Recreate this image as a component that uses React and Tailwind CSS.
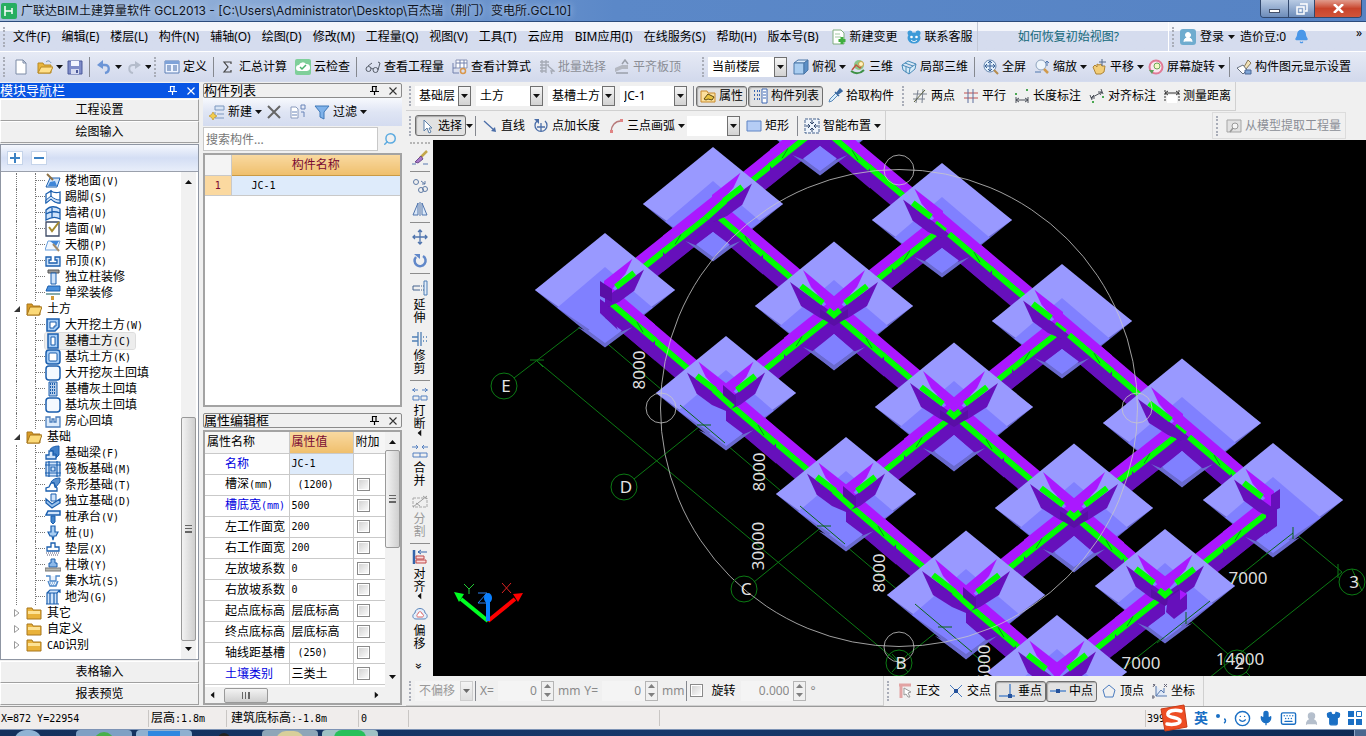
import React, { useState } from 'react';
import { Bell, Smile, Mic, Keyboard, Shirt, Search, UserRound } from 'lucide-react';

/* ---------- icons ---------- */

const B = '#1b5fae';
const L = '#cfe3fa';

const glyphs = {
  file: <path d="M3 1h7l3 3v11H3z M10 1v3h3" fill="#fff" stroke="#7d8ba5" />,
  open: <><path d="M1 4h5l1 2h7v8H1z" fill="#e9b53c" stroke="#b98a24" /><path d="M4 8h12l-3 6H1z" fill="#ffe08a" stroke="#b98a24" /><path d="M9 3c2-2 4-1 5 1" fill="none" stroke="#6f8fb8" /></>,
  save: <><path d="M1 2h14v13H1z" fill="#7f8cc8" stroke="#4d5a9a" /><path d="M4 2h8v5H4z" fill="#f4f6ff" /><path d="M4 10h8v5H4z" fill="#d5daf0" /><path d="M9 11h2v3H9z" fill="#4d5a9a" /></>,
  undo: <><path d="M4 6h5c5 0 5 7 0 8" fill="none" stroke="#6c95d6" strokeWidth="2.4" /><path d="M7 1v9L1 6z" fill="#6c95d6" /></>,
  redo: <><path d="M12 6H7c-5 0-5 7 0 8" fill="none" stroke="#b4bccb" strokeWidth="2" /><path d="M9 2v8l6-4z" fill="#b4bccb" /></>,
  define: <><path d="M1 2h14v12H1z" fill="#eef4ff" stroke="#5d7fb5" /><path d="M1 2h14v3H1z" fill="#7ea2d8" /><path d="M3 7h4M3 9h4M3 11h4M9 7h4M9 9h4M9 11h4" stroke="#3f66a5" /></>,
  sum: <path d="M11 5V3H4l4 5-4 5h7v-2" fill="none" stroke="#444" strokeWidth="1.200" />,
  cloud: <><rect width="16" height="16" rx="2" fill="#7fcf9a" /><path d="M4 12a3 3 0 0 1 0-6 4 4 0 0 1 7-1 3.500 3.500 0 0 1 1 7z" fill="#fff" /><path d="M5 8l2 2 4-4" fill="none" stroke="#49b36e" strokeWidth="1.500" /></>,
  glasses: <path d="M1 10a2.500 2.500 0 1 0 5 0a2.500 2.500 0 1 0-5 0M8 11a2.500 2.500 0 1 0 5 0a2.500 2.500 0 1 0-5 0M6 9l2 1M3 7l4-3M13 11l2-7-2-1" fill="none" stroke="#555c68" />,
  formula: <><path d="M4 1h11v8H4z" fill="#fff" stroke="#8893b5" /><path d="M4 4h11M8 1v8M12 1v8M1 4v10h6M1 9h3" stroke="#7381ad" fill="none" /><circle cx="11" cy="12" r="2.500" fill="none" stroke="#d9974c" strokeWidth="1.500" /></>,
  batch: <path d="M1 3h9M1 6h9M1 9h6M1 12h6M3 1v13M7 1v13M9 7l6 5-3 0 1 3" fill="none" stroke="#a5aab5" strokeWidth="1.300" />,
  slab: <><path d="M1 9l7-3h6v4H8l-7 3z" fill="#b4b8c1" /><path d="M8 5l3-4 3 4M2 14h12" stroke="#9ba0aa" fill="none" strokeWidth="1.500" /></>,
  cube: <><path d="M1 4l4-3h10l-4 3z" fill="#dcebfa" stroke="#4c78a8" /><path d="M1 4h10v11H1z" fill="#a9cdf0" stroke="#4c78a8" /><path d="M11 4l4-3v10l-4 4z" fill="#5b8fc6" stroke="#4c78a8" /></>,
  orbit: <><circle cx="9" cy="6" r="5" fill="#8cc78a" /><path d="M2 11l4-5 4 3 3-4" stroke="#c1553e" strokeWidth="1.500" fill="none" /><path d="M1 12c4 3 9 3 13-1" stroke="#3d9145" strokeWidth="2" fill="none" /><circle cx="11" cy="5" r="2.500" fill="#fff3c0" stroke="#caa24a" /></>,
  local3d: <path d="M1 6l6-4 8 3-1 5-6 5-6-4zM1 6l8 3 6-4M9 9l-1 6M4 4l8 3M5 7.500v6" fill="#d6ebf8" stroke="#4a8bb8" />,
  full: <><circle cx="7" cy="7" r="6" fill="#e2f0fc" stroke="#6787ae" /><path d="M7 2v10M2 7h10M5 4l2-2 2 2M5 10l2 2 2-2M4 5L2 7l2 2M10 5l2 2-2 2" stroke="#365f96" fill="none" /><path d="M11 11l4 4" stroke="#b58b4c" strokeWidth="2" /></>,
  zoom: <><circle cx="7" cy="6" r="5" fill="#eef5fc" stroke="#8fa4be" /><path d="M10 10l4 4" stroke="#d09a4c" strokeWidth="2.500" /><path d="M13 2v5M11 4l2-2 2 2M1 13h6" stroke="#4f77ad" fill="none" /></>,
  pan: <><path d="M2 8l2-2 2 2V5l2 1 2-1 1 2 3 0-1 6-3 2H5z" fill="#f2cd78" stroke="#ae8434" /><path d="M11 0v7M8 3h7" stroke="#52688a" /></>,
  spin: <><circle cx="8" cy="8" r="6.500" fill="#fbe6ef" stroke="#e07a96" strokeWidth="2" /><circle cx="9" cy="7" r="3" fill="#f5f9c8" stroke="#6aa858" /><path d="M1 11l3 4 2-4z" fill="#5aa05a" /></>,
  display: <><path d="M8 8l4-7 3 3-5 6z" fill="#f2e2b8" stroke="#8a7a58" /><path d="M1 9l6-3 4 5-4 4z" fill="#fff" stroke="#66707f" /><path d="M9 11h6v4H9z" fill="#7fa5d6" stroke="#4c6896" /></>,
  props: <><path d="M1 3h6l1 2h7v9H1z" fill="#fbdf9c" stroke="#c88a2e" /><path d="M4 11l4-5 6 3-2 3-4-1-2 1z" fill="#e8c240" stroke="#5d4a12" /></>,
  list: <><path d="M2 3h2M2 7h2M2 11h2M5 3h3M5 7h3M5 11h3" stroke="#3c67b2" strokeWidth="2" strokeDasharray="1 1" /><path d="M10 1h5v14h-5z" fill="#fff" stroke="#3c67b2" /><path d="M11 4h3M11 7h3M11 10h3" stroke="#3c67b2" /></>,
  dropper: <><path d="M2 14l1-3 6-6 2 2-6 6z" fill="#d9effc" stroke="#5b88b8" /><path d="M8 4l4 4M10 5l3-4 2 2-4 3z" stroke="#3b69a0" fill="#3b69a0" strokeWidth="1.500" /></>,
  twoPoint: <><path d="M1 6h14M1 11h12M6 2L4 15M11 1l-1 14" fill="none" stroke="#7a8290" /><path d="M2 14L13 2" stroke="#5a5f3c" /></>,
  parallel: <><path d="M1 5h14M1 10h14" stroke="#c24f4f" /><path d="M5 1v14M10 1v14" stroke="#5d6f9e" /></>,
  length: <><path d="M2 9v6M14 9v6M2 12h12M5 10l-3 2 3 2M11 10l3 2-3 2" fill="none" stroke="#4a4f58" /><path d="M1 5h2v2H1zM12 1h2v2h-2z" fill="#4aa852" /></>,
  aligned: <><path d="M1 7l2 5M12 1l2 5M2 10l11-6M5 7l-3 3 4 0M9 4l4 0-2 3" fill="none" stroke="#4a4f58" /><path d="M3 13h2v2H3zM13 8h2v2h-2z" fill="#4aa852" /></>,
  measure: <><path d="M3 7h10v8H3z" fill="#fff" /><path d="M1 2v12M15 2v12" stroke="#333" strokeDasharray="2 1" /><path d="M1 5h14M4 3L1 5l3 2M12 3l3 2-3 2" fill="none" stroke="#333" /></>,
  cursor: <path d="M5 2v11l3-3 2 5 2-1-2-4h3z" fill="#fff" stroke="#5b7fa8" />,
  line: <><path d="M2 3l10 9" stroke="#4b6ea8" strokeWidth="1.300" /><path d="M14 14l-5-1 4-4z" fill="#4b6ea8" /></>,
  addLen: <><path d="M4 3a6 6 0 1 0 8 0M8 5v8M4 9h8" fill="none" stroke="#4b6ea8" strokeWidth="1.300" /><path d="M1 1h5v5z" fill="#4b6ea8" /></>,
  arc: <><path d="M3 14C3 8 7 3 13 3" fill="none" stroke="#b87a7a" strokeWidth="1.400" /><path d="M2 12h3v3H2zM12 1h3v3h-3z" fill="#e08484" /></>,
  rect: <path d="M1 3h14v10H1z" fill="#b5cdf5" stroke="#5f84c4" />,
  smart: <><path d="M1 1h14v14H1z" fill="#eef4fb" stroke="#44608c" strokeDasharray="3 1" /><path d="M8 2v4M8 10v4M2 8h4M10 8h4M6 4l2 2 2-2M6 12l2-2 2 2M4 6l2 2-2 2M12 6l-2 2 2 2" fill="none" stroke="#33496e" /></>,
  extract: <><path d="M1 2h14v12H1z" fill="#e2e2e2" stroke="#a5a5a5" /><circle cx="9" cy="8" r="3" fill="#f5f5f5" stroke="#999" /><path d="M7 10l-3 4" stroke="#999" strokeWidth="1.500" /></>,
  newItem: <><path d="M6 2h9v4H6zM8 10h7" fill="#d9e5f5" stroke="#7d98bf" /><path d="M6 8v6h9" stroke="#7d98bf" fill="none" /><path d="M4 8l1.500 2.500L8 12l-2.500 1.500L4 16l-1.500-2.500L0 12l2.500-1.500z" fill="#f2cc4d" stroke="#b98c1d" strokeWidth=".6" /></>,
  remove: <path d="M2 2l12 12M14 2L2 14" stroke="#666" strokeWidth="2" />,
  copyList: <><path d="M1 3h5l2 2v9H1z" fill="#fff" stroke="#8a9bbd" /><path d="M2 8h5M2 11h5M11 1h4v4h-4zM11 8h3v5" fill="none" stroke="#6884b8" /></>,
  filter: <path d="M1 2h14L10 8v7l-4-2V8z" fill="#7fb2ea" stroke="#3f78b8" />,
  change: <><path d="M2 1h8l3 3v11H2z" fill="#fff" stroke="#7fae7f" /><path d="M4 5h5M4 8h6" stroke="#a3c8a3" /><path d="M11 8v7M7.500 11.500h7" stroke="#3fae3f" strokeWidth="3" /></>,
  service: <><ellipse cx="8" cy="9" rx="6.500" ry="5.500" fill="#3d9ad8" /><circle cx="4" cy="4" r="2.500" fill="#3d9ad8" /><circle cx="12" cy="4" r="2.500" fill="#3d9ad8" /><circle cx="5.500" cy="8" r="1.300" fill="#fff" /><circle cx="10.500" cy="8" r="1.300" fill="#fff" /><path d="M5 11c2 2 4 2 6 0" stroke="#fff" fill="none" /></>,
  brush: <><path d="M15 1L8 8" stroke="#c3a54a" strokeWidth="2.500" /><path d="M9 6l2 3-5 4-3-1z" fill="#a878c8" stroke="#6d4b8c" /><path d="M0 14h4M11 14h5" stroke="#5878b0" /></>,
  copy: <><circle cx="4" cy="4" r="2.500" /><circle cx="9" cy="12" r="2.500" /><circle cx="13" cy="11" r="2.500" /><path d="M9 3l4 3M13 3v3h-3" /></>,
  mirror: <path d="M6 2v12H1zM10 2v12h5zM8 1v14" fill="#dbe8f8" stroke="#4f74ad" />,
  move: <path d="M8 1v14M1 8h14M6 3l2-2 2 2M6 13l2 2 2-2M3 6L1 8l2 2M13 6l2 2-2 2" fill="none" stroke="#4f74ad" strokeWidth="1.300" />,
  rotate: <><path d="M4 5a5.500 5.500 0 1 0 7-1" fill="none" stroke="#6188c9" strokeWidth="2.500" /><path d="M2 2h6v5z" fill="#6188c9" /></>,
  extend: <><path d="M12 1h3v14h-3z" fill="#e3edf9" stroke="#4f7fb5" /><path d="M1 6h6M1 10h6M1 6v4" fill="none" stroke="#47658f" /><path d="M7 6h5M7 10h5" stroke="#47658f" strokeDasharray="1 1" /></>,
  trim: <path d="M6 1v14M9 1v14M0 6h6M0 10h6M11 6h1M11 10h1M14 6h1M14 10h1" fill="none" stroke="#4f7fb5" strokeWidth="1.300" />,
  breakIt: <path d="M1 10h6v4H1zM9 10h6v4H9zM0 4h6M10 4h6M3 2L1 4l2 2M13 2l2 2-2 2" fill="none" stroke="#5580c0" />,
  merge: <path d="M1 10h14v4H1zM8 10v4M0 4h6M10 4h6M4 2l2 2-2 2M12 2l-2 2 2 2" fill="none" stroke="#5580c0" />,
  split: <><path d="M1 4h14v9H1z" fill="none" stroke="#a8a8a8" strokeDasharray="3 1" /><path d="M1 13L15 2M4 9l4 3M11 2l4 3" stroke="#9c9c9c" /></>,
  align: <><path d="M2 1v14" stroke="#3465ab" strokeWidth="2.500" /><path d="M4 7h8v3H4zM4 11h10v3H4z" fill="#fbdada" stroke="#c04848" /><path d="M6 3h9M9 1L6 3l3 2" fill="none" stroke="#3465ab" /></>,
  offset: <><path d="M4 13c-4 0-4-5-1-6 0-6 10-6 10 0 3 1 3 6-1 6z" fill="#e5effb" stroke="#5b84ba" /><path d="M6 11c-2 0-1-3 0-3 0-3 4-3 4 0 2 0 2 3 0 3z" fill="#fff" stroke="#dd6666" /></>,
  ortho: <><path d="M2 2h12M4 2v13" stroke="#e2a3a3" strokeWidth="3" fill="none" /><path d="M7 5l7 4-3 1 2 4-2 0-2-3-2 1z" fill="#fff" stroke="#999" /></>,
  cross: <><path d="M2 2l12 12M14 2L2 14" stroke="#4b7cbf" /><path d="M6 6h4v4H6z" fill="#25529b" /></>,
  perp: <><path d="M11 1v12M0 13h16" stroke="#5588cc" strokeWidth="1.500" /><path d="M9 11h4v4H9z" fill="#25529b" /></>,
  mid: <><path d="M0 8h16" stroke="#5588cc" strokeWidth="1.500" /><path d="M6 6h4v4H6z" fill="#25529b" /></>,
  vertex: <path d="M8 2l6 5-2 7H4L2 7z" fill="none" stroke="#4b7cbf" />,
  coord: <><path d="M4 3v10h11M4 13l5-6 3 3V5" fill="#dfe9f8" stroke="#5778ad" /><path d="M1 1l2 2M3 1L1 4M12 1l3 3M15 1l-3 3M0 13h2v2H0z" stroke="#667" fill="none" /></>,
  // tree
  floor: <><path d="M5 5h10l-3 9H1z" fill={L} stroke={B} /><path d="M5 9l5-1 2 5H3z" fill="#3f86d8" /><path d="M2 1l6 6" stroke="#8d7146" strokeWidth="2" /></>,
  skirt: <><path d="M1 5l5-3v8l-5 4zM6 2c3 2 6 2 9 1v11c-3 0-6-1-9-4z" fill="#fff" stroke={B} strokeWidth="1.300" /><path d="M1 11l5-4c3 3 6 4 9 4v3c-3 0-6-1-9-4l-5 4z" fill={L} stroke={B} /></>,
  dado: <path d="M1 5c4-4 9-4 14-1v10c-5-3-9-2-14 1zM1 9c5-3 9-3 14-1M7 3v10" fill={L} stroke={B} strokeWidth="1.300" />,
  wall: <><path d="M1 1h13v14H1z" fill="#fff" stroke="#3d4a66" strokeWidth="1.300" /><path d="M4 6l3 4 7-9" fill="none" stroke="#a58a2e" strokeWidth="2" /></>,
  ceiling: <><path d="M3 4h12l-3 9H0z" fill="#f2f8ff" stroke="#6aa0dc" /><path d="M5 4h9l-3 5z" fill="#3f86d8" /><path d="M8 7l6 7" stroke="#a08a6a" strokeWidth="2" /></>,
  hang: <path d="M1 4h5v3H4v3h8V7h-2V4h5v9H1z" fill={L} stroke={B} strokeWidth="1.300" />,
  column: <><path d="M3 1h11v3H3z" fill="#999" stroke="#555" /><path d="M6 4h5v11H6z" fill={L} stroke={B} /></>,
  beam: <><path d="M3 1h12v5H1z" fill="#4a90dc" stroke={B} /><path d="M1 8h14v2H1z" fill="#8aa" /><path d="M6 11h3v4H6z" fill="#d39a35" /></>,
  pit: <><path d="M2 2h12v8l-4 4H2z" fill="#a5ccf5" stroke={B} strokeWidth="1.500" /><path d="M5 5h6v4H9v2H5z" fill="#fff" stroke={B} /></>,
  trench: <><path d="M3 1h10v14H3z" fill="#a5ccf5" stroke={B} strokeWidth="1.500" /><path d="M6 4h4v8H6z" fill="#fff" stroke={B} /></>,
  sump: <><rect x="1" y="1" width="14" height="14" rx="3" fill="#a5ccf5" stroke={B} strokeWidth="1.500" /><rect x="4" y="4" width="8" height="8" rx="1" fill="#fff" stroke={B} /></>,
  fill: <rect x="1" y="1" width="14" height="14" rx="3" fill="#f4f9ff" stroke={B} strokeWidth="1.500" />,
  hatch: <><path d="M4 1h8v14H4z" fill="#b6cdea" stroke={B} /><path d="M5 3h6M5 6h6M5 9h6M5 12h6" stroke={B} strokeDasharray="1 1" strokeWidth="2" /></>,
  room: <path d="M1 4h4v5h2V6h2v3h2V4h4v10H1z" fill="#dcebfb" stroke="#4b7ebc" strokeWidth="1.300" />,
  fbeam: <><path d="M5 5c1-3 5-4 9-4v9l-3 3v-4H8V6z" fill="#3f7fc8" stroke={B} /><path d="M1 14v-4h3V6h4v4h3v4z" fill={L} stroke={B} strokeWidth="1.300" /></>,
  raft: <path d="M1 1h14v14H1zM4 0v16M12 0v16M0 4h16M0 12h16M6 6h4v4H6z" fill={L} stroke={B} strokeWidth="1.200" />,
  strip: <><path d="M6 5c2-3 5-4 9-4v4l-4 5-2-4z" fill="#5a91cf" stroke={B} /><path d="M1 14v-3l3-1 2-4h3l1 4 2 1v3z" fill="#fff" stroke={B} strokeWidth="1.300" /></>,
  pad: <><path d="M1 6l6 5 8-5v4l-8 5-6-5z" fill="#9ac2ec" stroke={B} strokeWidth="1.300" /><path d="M6 1h5v7H6z" fill={L} stroke={B} /></>,
  cap: <><path d="M3 2h12v4H1z" fill={L} stroke={B} strokeWidth="1.500" /><path d="M6 7h4v6l-2 2-2-2z" fill="#4385cc" stroke={B} /></>,
  pile: <path d="M6 1h4v6h3l-2 4H9l-1 4-1-4H5L3 7h3z" fill="#a8cdf2" stroke={B} strokeWidth="1.200" />,
  cushion: <><path d="M6 2h4v4h4v4H2V6h4z" fill="#fff" stroke={B} strokeWidth="1.300" /><path d="M1 12h14M2 14h12" stroke="#557" strokeDasharray="1 1" /></>,
  pier: <><path d="M6 2h4v4h2v4H4V6h2z" fill="#8cb8e8" stroke={B} /><path d="M0 11h16v3H0z" fill="#b8b8b0" stroke="#777" /></>,
  sumpPit: <><path d="M1 3h4v5h6V3h4M3 8l2 5h6l2-5" fill="#e8f1fb" stroke="#4b86c8" strokeWidth="1.300" /><path d="M5 10h7M6 12h5" stroke="#4b86c8" strokeDasharray="1 1" /></>,
  ditch: <path d="M2 4h10v11H2zM2 4l3-3h10l-3 3M5 4v11M9 4v11M15 1v3M1 15h13" fill={L} stroke={B} strokeWidth="1.200" />,
  folderOpen: <><path d="M1 3h5l1 2h7v9H1z" fill="#d99b25" stroke="#a8771c" /><path d="M4 6h12l-3 8H1z" fill="#fbd978" stroke="#a8771c" /></>,
  folder: <><path d="M1 3h5l1 2h8v9H1z" fill="#e9b23a" stroke="#a8771c" /><path d="M2 6h12v3H2z" fill="#fde296" /></>,
};

const Icon = ({ name }) => (
  <svg width="16" height="16" viewBox="0 0 16 16" className="shrink-0" fill="none" stroke={name === 'copy' ? '#5f7ba5' : 'none'} aria-hidden="true">
    {glyphs[name]}
  </svg>
);

const Caret = ({ className = '' }) => (
  <svg width="7" height="4" viewBox="0 0 7 4" className={`shrink-0 ${className}`} aria-hidden="true"><path d="M0 0h7L3.500 4z" fill="#111" /></svg>
);

const Pin = ({ color }) => (
  <svg width="9" height="9" viewBox="0 0 9 9" aria-hidden="true"><path d="M2.500 0v5M6 0v5M2 .5h5M0 5.500h9M4.500 5v4" stroke={color} strokeWidth="1.200" fill="none" /></svg>
);

const Cross = ({ color }) => (
  <svg width="8" height="8" viewBox="0 0 8 8" aria-hidden="true"><path d="M.5.5l7 7M7.500.5l-7 7" stroke={color} strokeWidth="1.100" /></svg>
);

/* ---------- small parts ---------- */

// half-width latin next to full-width CJK
const Song = ({ children }) =>
  children.split(/([\x20-\x7e]+)/).map((part, i) =>
    i % 2 ? <span key={i} className="font-['DejaVu_Sans_Mono',monospace] text-[10px]">{part}</span> : part
  );

const Grip = () => <span className="mx-[3px] h-5 w-[3px] shrink-0 border-l-2 border-dotted border-[#a9adb8]" />;
const Sep = () => <span className="mx-[2px] h-5 w-px shrink-0 bg-[#85888f]" />;

const toolClass = (pressed, off) => {
  const base = 'flex h-[21px] shrink-0 items-center gap-[3px] whitespace-nowrap';
  if (pressed) return `${base} rounded-[3px] border border-[#6f6f6f] bg-[#e2e2e2] px-[3px] shadow-[inset_1px_1px_1px_#aaa]`;
  return `${base} px-1 ${off ? 'text-[#8b8e96]' : 'text-black'}`;
};

const Tool = ({ icon, label, caret, off, pressed }) => (
  <button type="button" aria-label={label || icon} className={toolClass(pressed, off)}>
    <Icon name={icon} />
    {label && <span>{label}</span>}
    {caret && <Caret className="-mr-1" />}
  </button>
);

const Combo = ({ value, label, width, off }) => (
  <div className={`relative h-5 shrink-0 ${width}`}>
    <select aria-label={label} disabled={off} defaultValue={value} className={`h-full w-full appearance-none pl-1 opacity-100 ${off ? 'bg-[#f4f4f4] text-[#9a9a9a]' : 'bg-white text-black'}`}>
      <option>{value}</option>
    </select>
    <span className={`pointer-events-none absolute inset-y-0 right-0 flex w-[13px] items-center justify-center border bg-linear-to-b from-[#f5f5f5] to-[#d2d2d2] ${off ? 'border-[#b5b5b5] opacity-60' : 'border-[#707070]'}`}>
      <Caret />
    </span>
  </div>
);

const Spin = ({ label, value, width }) => (
  <div className="flex h-5 shrink-0">
    <input aria-label={label} defaultValue={value} className={`bg-[#f4f4f4] pr-1 text-right text-[#8a8a8a] ${width}`} />
    <span className="flex w-[13px] flex-col justify-around border border-[#b5b5b5] bg-[#f0f0f0]">
      <Caret className="mx-auto rotate-180 opacity-50" />
      <Caret className="mx-auto opacity-50" />
    </span>
  </div>
);

const PanelHead = ({ title, active }) => (
  <div className={`flex h-[15px] shrink-0 items-center justify-between pr-1 ${active ? 'bg-[#0855e4] text-white' : 'rounded-[2px] border border-[#8b8b8b] bg-[#f0f0f0] text-black'}`}>
    <span className="text-[13px] leading-[13px]">{title}</span>
    <span className="flex items-center gap-[10px]">
      <Pin color={active ? '#fff' : '#000'} />
      <Cross color={active ? '#fff' : '#333'} />
    </span>
  </div>
);

const WideButton = ({ children }) => (
  <button type="button" className="h-[22px] w-full shrink-0 border border-t-white border-l-white border-r-[#a0a0a0] border-b-[#a0a0a0] bg-[#f0f0f0] text-center leading-5">{children}</button>
);

/* ---------- data ---------- */

const menus = ['文件(F)', '编辑(E)', '楼层(L)', '构件(N)', '辅轴(O)', '绘图(D)', '修改(M)', '工程量(Q)', '视图(V)', '工具(T)', '云应用', 'BIM应用(I)', '在线服务(S)', '帮助(H)', '版本号(B)'];

const tree = [
  ['floor', '楼地面(V)'], ['skirt', '踢脚(S)'], ['dado', '墙裙(U)'], ['wall', '墙面(W)'], ['ceiling', '天棚(P)'], ['hang', '吊顶(K)'], ['column', '独立柱装修'], ['beam', '单梁装修'],
  ['folderOpen', '土方', 'open'],
  ['pit', '大开挖土方(W)'], ['trench', '基槽土方(C)', 'active'], ['sump', '基坑土方(K)'], ['fill', '大开挖灰土回填'], ['hatch', '基槽灰土回填'], ['fill', '基坑灰土回填'], ['room', '房心回填'],
  ['folderOpen', '基础', 'open'],
  ['fbeam', '基础梁(F)'], ['raft', '筏板基础(M)'], ['strip', '条形基础(T)'], ['pad', '独立基础(D)'], ['cap', '桩承台(V)'], ['pile', '桩(U)'], ['cushion', '垫层(X)'], ['pier', '柱墩(Y)'], ['sumpPit', '集水坑(S)'], ['ditch', '地沟(G)'],
  ['folder', '其它', 'closed'], ['folder', '自定义', 'closed'], ['folder', 'CAD识别', 'closed'],
];

const props = [
  ['名称', 'JC-1', 'key'], ['槽深(mm)', ' (1200)'], ['槽底宽(mm)', '500', 'key'], ['左工作面宽', '200'], ['右工作面宽', '200'], ['左放坡系数', '0'], ['右放坡系数', '0'],
  ['起点底标高', '层底标高'], ['终点底标高', '层底标高'], ['轴线距基槽', ' (250)'], ['土壤类别', '三类土', 'key'],
];

const sideTools = [
  ['brush'], 'sep', ['copy'], ['mirror'], 'sep', ['move'], ['rotate'], 'sep', ['extend', '延伸'], ['trim', '修剪'], 'sep',
  ['breakIt', '打断', true], ['merge', '合并'], ['split', '分割'], 'sep', ['align', '对齐', true], ['offset', '偏移'],
];

/* ---------- 3d view ---------- */

const BRIGHT = '#aa18ff';
const DARK = '#6610bb';
const POST = '#5a0ea6';
const GREEN = '#00ff00';

// center x, center y of the rim, half width, arms
const footings = {
  f1: [605, 290, 70, 'ur lr'], f2: [713, 204, 70, 'ur ll lr'], f3: [820, 118, 70, 'll lr'],
  f4: [834, 306, 79, 'ul ur ll lr'], f5: [942, 220, 70, 'ul ll lr'], f6: [726, 393, 70, 'ul ur lr'],
  f7: [1062, 321, 70, 'ul ll lr'], f8: [954, 407, 79, 'ul ur ll lr'], f9: [846, 494, 70, 'ul ur lr'],
  f10: [1182, 423, 79, 'ul ll lr'], f11: [1074, 508, 79, 'ul ur ll lr'], f12: [1273, 500, 70, 'ul ll'],
  f13: [966, 595, 79, 'ul ur lr'], f14: [1165, 586, 70, 'ul ur ll'], f15: [1057, 672, 70, 'ul ur'],
};

const spans = [
  ['f1', 'f6', 'f9', 'f13', 'f15'], ['f2', 'f4', 'f8', 'f11', 'f14'], ['f3', 'f5', 'f7', 'f10', 'f12'],
  ['f1', 'f2', 'f3'], ['f6', 'f4', 'f5'], ['f9', 'f8', 'f7'], ['f13', 'f11', 'f10'], ['f15', 'f14', 'f12'],
];

const pts = (list) => list.map((p) => p.join(',')).join(' ');

const Strip = ({ x1, y1, x2, y2 }) => (
  <g>
    <polygon points={pts([[x1, y1 - 16], [x2, y2 - 16], [x2, y2], [x1, y1]])} fill={BRIGHT} />
    <polygon points={pts([[x1, y1], [x2, y2], [x2, y2 + 20], [x1, y1 + 20]])} fill={DARK} />
    <line x1={x1} y1={y1} x2={x2} y2={y2} stroke={GREEN} strokeWidth="6" />
  </g>
);

const Footing = ({ x, y, w, arms }) => {
  const k = w / 79;
  const h = w * 0.815;
  const has = (a) => arms.includes(a);
  const rel = (list, s = 1) => pts(list.map(([a, b]) => [x + a * s, y + 6 + b]));
  const inner = (s) => (
    <g>
      <polygon points={rel([[-31 * k, -42 * k], [1, -15], [1, 2], [-9, -9], [-23 * k, -25 * k]], s)} fill={BRIGHT} />
      <polygon points={rel([[-44 * k, -30 * k], [0, 2], [0, 12], [-14, 6], [-33 * k, -6 * k]], s)} fill={DARK} />
      <line x1={x - 33 * k * s} y1={y + 6 - 26 * k} x2={x - 11 * s} y2={y - 3} stroke={GREEN} strokeWidth="6" />
    </g>
  );
  const lower = (s, post) => {
    const m = s < 0 ? 0.796 : 0.848;
    return (
      <g>
        <polygon points={rel([[0, -14], [50, -14 + 50 * m], [50, 2 + 50 * m], [0, 2]], s)} fill={BRIGHT} />
        <polygon points={rel([[0, 2], [50, 2 + 50 * m], [50, 22 + 50 * m], [0, 22]], s)} fill={DARK} />
        {post && <polygon points={rel([[0, 2], [14, -5], [14, 5], [5, 10], [0, 12]], s)} fill={POST} />}
        <line x1={x + 7 * s} y1={y + 14} x2={x + 50 * s} y2={y + 8 + 50 * m} stroke={GREEN} strokeWidth="6" />
        <line x1={x + 32 * s} y1={y + 5 + 32 * m} x2={x + 38 * s} y2={y + 10 + 38 * m} stroke="#0a8a20" />
      </g>
    );
  };
  return (
    <g>
      <polygon points={pts([[x, y - h + 7], [x + w, y], [x, y + h], [x - w, y]])} fill="#6a6acf" />
      <polygon points={pts([[x, y - h], [x + w, y], [x, y + h - 7], [x - w, y]])} fill="#9999ff" />
      <polygon points={pts([[x, y - 26 * k], [x + 54 * k, y + 20 * k], [x, y + h - 7], [x - 54 * k, y + 20 * k]])} fill="#8080ff" />
      {has('ll') && lower(-1, has('ul'))}
      {has('lr') && lower(1, has('ur'))}
      {has('ul') && inner(1)}
      {has('ur') && inner(-1)}
      {has('ul') && has('lr') && !has('ll') && <line x1={x - 12} y1={y - 3} x2={x + 7} y2={y + 14} stroke={GREEN} strokeWidth="6" />}
      {has('ul') && has('lr') && !has('ur') && <line x1={x - 6} y1={y + 2} x2={x + 4} y2={y + 10} stroke={GREEN} strokeWidth="3" />}
      {has('ur') && has('ll') && !has('ul') && <line x1={x + 12} y1={y - 3} x2={x - 7} y2={y + 14} stroke={GREEN} strokeWidth="6" />}
      {has('ul') && has('ur') && has('lr') && !has('ll') && <polygon points={rel([[-3, -14], [10, -3], [10, 7], [-3, -4]])} fill={POST} />}
      {has('ul') && has('ur') && has('ll') && (
        <>
          <polygon points={rel([[-14, -3], [0, 6], [14, -3], [14, 5], [5, 11], [0, 14], [-5, 11], [-14, 5]])} fill={POST} />
          <path d={`M${x - 6} ${y + 4}l6 5l6 -5`} stroke={GREEN} strokeWidth="6" fill="none" />
        </>
      )}
      {(has('ll') || has('lr')) && (
        <>
          <polygon points={rel([[0, 22], [19 * k, 39 * k], [0, 54 * k], [-19 * k, 39 * k]])} fill="#8080ff" />
          <polygon points={rel([[-31 * k, 35 * k], [-17 * k, 41 * k], [0, 53 * k], [17 * k, 41 * k], [31 * k, 35 * k], [0, 58 * k]])} fill="#6a6acf" />
        </>
      )}
    </g>
  );
};

const Bubble = ({ x, y, t }) => (
  <g>
    <circle cx={x} cy={y} r="13" fill="none" stroke="#0c7a14" />
    <text x={x + 2} y={y + 6} textAnchor="middle" fontSize="17" fill="#e4e4e4">{t}</text>
  </g>
);

const Dim = ({ x, y, t, up }) => (
  <text x={x} y={y} fontSize="17" fill="#dedede" textAnchor="middle" dominantBaseline="central" transform={up ? `rotate(-90 ${x} ${y})` : undefined}>{t}</text>
);

const Scene = () => (
  <svg viewBox="433 140 933 536" preserveAspectRatio="xMinYMin slice" className="h-full w-full bg-black font-['Noto_Sans',sans-serif]" role="img" aria-label="三维视图">
    <g stroke="#0c7a14" fill="none">
      <path d="M514 378L605 308M537 361L900 664M583 323L985 664M634 479L730 402M754 582L850 504M909 654L960 613" />
      <path d="M530 360h14M537 361l6 6M576 323h14" />
      <path d="M1342 572L1270 512M1342 572L1209 678M1293 533L1120 671M1228 654L1165 598M1338 564v14" />
      <path d="M1352 569l10 22M892 654l16 18M908 654l-16 18M1246 672l8 8" />
    </g>
    {spans.map((line, i) =>
      line.slice(1).map((id, j) => {
        const a = footings[line[j]];
        const b = footings[id];
        return <Strip key={i + id} x1={a[0]} y1={a[1] + 8} x2={b[0]} y2={b[1] + 8} />;
      })
    )}
    {Object.entries(footings).map(([id, [x, y, w, arms]]) => <Footing key={id} x={x} y={y} w={w} arms={arms} />)}
    {/* corner end caps */}
    <polygon points="600,281 612,289 612,302 600,296" fill={POST} />
    <polygon points="600,299 607,304 618,330 600,313" fill={DARK} />
    <polygon points="1271,495 1280,489 1280,508 1271,512" fill={DARK} />
    <polygon points="1266,514 1277,508 1277,526 1266,534" fill={DARK} />
    <polygon points="1168,598 1180,590 1187,594 1187,609 1174,619 1166,612" fill={DARK} />
    <polygon points="1180,590 1187,594 1180,600" fill={BRIGHT} />
    <path d="M680 405l45 38M800 506l45 38M915 604l57 48M1210 601l-53 42M1293 533l-32 25M697 425h14M817 526h14M938 627h14M1293 527v12M1186 612v12" stroke="#0a6418" fill="none" />
    <g stroke="#c8c8c8" fill="none" strokeWidth=".8">
      <circle cx="899" cy="408" r="238.500" />
      <circle cx="899" cy="170" r="15" />
      <circle cx="899" cy="647" r="15" />
      <circle cx="661" cy="408" r="15" />
      <circle cx="1137" cy="408" r="15" />
    </g>
    <Bubble x={504} y={386} t="E" />
    <Bubble x={624} y={487} t="D" />
    <Bubble x={744} y={589} t="C" />
    <Bubble x={899} y={663} t="B" />
    <Bubble x={1352} y={582} t="3" />
    <Bubble x={1237} y={663} t="2" />
    <Dim x={638} y={370} t="8000" up />
    <Dim x={758} y={472} t="8000" up />
    <Dim x={757} y={546} t="30000" up />
    <Dim x={878} y={573} t="8000" up />
    <Dim x={983} y={664} t="5000" up />
    <Dim x={1248} y={577} t="7000" />
    <Dim x={1141} y={662} t="7000" />
    <Dim x={1240} y={658} t="14000" />
    <g strokeWidth="4">
      <path d="M488 621L461 599" stroke="#00ff22" />
      <path d="M488 621L515 599" stroke="#ff0000" />
      <path d="M488 621V598" stroke="#0a80ff" />
      <path d="M454 592l10 2-5 8z" fill="#00ff22" />
      <path d="M523 593l-10 1 5 8z" fill="#ff0000" />
      <ellipse cx="488" cy="598" rx="4" ry="5" fill="#0a80ff" />
    </g>
    <g fill="none" strokeWidth="1">
      <path d="M464 584l5 5 5-5M469 589v5" stroke="#22cc33" />
      <path d="M502 583l9 10M511 583l-9 10" stroke="#dd2222" />
      <path d="M478 593h9l-9 10h9" stroke="#2a80ee" />
    </g>
  </svg>
);

/* ---------- panels ---------- */

const TitleBar = () => (
  <header className="relative flex h-[22px] shrink-0 items-center border-b border-[#2b4b7c] bg-linear-to-r from-[#a7bedd] via-[#5b88c8] via-45% to-[#5683c4] pl-[1px]">
    <svg width="16" height="16" viewBox="0 0 16 16" aria-hidden="true"><rect width="16" height="16" rx="2" fill="#27ae60" /><path d="M4 3v10M4 8h7M11 5v6" stroke="#fff" strokeWidth="1.500" fill="none" /></svg>
    <h1 className="ml-1 font-['Inter','Noto_Sans_CJK_SC',sans-serif] text-[12px] whitespace-nowrap text-[#10151f] [text-shadow:0_0_6px_#dce8f8]">广联达BIM土建算量软件 GCL2013 - [C:\Users\Administrator\Desktop\百杰瑞（荆门）变电所.GCL10]</h1>
    <div className="absolute top-0 right-1 flex h-[18px] overflow-hidden rounded-b-[4px] border border-t-0 border-[#31486d] text-white">
      <button type="button" aria-label="最小化" className="flex w-7 items-center justify-center border-r border-[#31486d] bg-linear-to-b from-[#b9cbe4] to-[#6d8cb9]"><span className="mt-1 h-[4px] w-[11px] border border-[#44516a] bg-white" /></button>
      <button type="button" aria-label="还原" className="flex w-[26px] items-center justify-center border-r border-[#31486d] bg-linear-to-b from-[#b9cbe4] to-[#6d8cb9]">
        <svg width="12" height="12" viewBox="0 0 12 12" fill="none" stroke="#fff" strokeWidth="1.500" aria-hidden="true"><path d="M4 1h7v7H9M1 4h7v7H1zM4 7h1v1H4z" /></svg>
      </button>
      <button type="button" aria-label="关闭" className="flex w-[46px] items-center justify-center bg-linear-to-b from-[#e09a8c] via-[#c8432b] to-[#d0553a]">
        <svg width="11" height="9" viewBox="0 0 11 9" stroke="#fff" strokeWidth="2.500" aria-hidden="true"><path d="M1 0l9 9M10 0L1 9" /></svg>
      </button>
    </div>
  </header>
);

const MenuBar = () => (
  <nav className="flex h-[30px] shrink-0 items-center border-b border-white bg-linear-to-b from-[#f3f5fb] from-30% to-[#d5dcee] to-31% whitespace-nowrap">
    <Grip />
    <div className="flex gap-[11px] pl-1">
      {menus.map((m) => <button type="button" key={m}>{m}</button>)}
    </div>
    <div className="ml-2 flex"><Tool icon="change" label="新建变更" /><Tool icon="service" label="联系客服" /></div>
    <a href="#help" className="flex h-full flex-1 items-center border-l border-[#c3c8d6] pl-10 text-[#12687a]">如何恢复初始视图?</a>
    <div className="flex h-full w-[198px] items-center border-l border-white">
      <Grip />
      <span className="ml-[2px] flex h-4 w-4 items-center justify-center rounded-[3px] bg-[#6faccf] text-white"><UserRound size={12} fill="#fff" /></span>
      <button type="button" className="ml-1 flex items-center gap-1">登录<Caret /></button>
      <span className="ml-[5px]">造价豆:0</span>
      <Bell size={15} className="ml-2" fill="#4a97e8" color="#4a97e8" />
      <span className="mr-1 mb-2 ml-auto">»</span>
    </div>
  </nav>
);

const MainToolbar = () => (
  <div className="flex h-[30px] shrink-0 items-center bg-[#d5dcee] pb-px">
    <div className="flex h-full w-[151px] items-center bg-linear-to-b from-[#e6eaf5] to-[#d2d9ec]">
      <Grip />
      <Tool icon="file" /><Tool icon="open" caret /><Tool icon="save" /><Sep />
      <Tool icon="undo" caret /><Tool icon="redo" caret />
    </div>
    <div className="flex h-full w-[548px] items-center bg-linear-to-b from-[#e6eaf5] to-[#d2d9ec]">
      <Grip />
      <Tool icon="define" label="定义" /><Sep />
      <Tool icon="sum" label="汇总计算" /><Tool icon="cloud" label="云检查" /><Sep />
      <span className="w-[2px]" /><Tool icon="glasses" label="查看工程量" /><Tool icon="formula" label="查看计算式" />
      <Tool icon="batch" label="批量选择" off /><Tool icon="slab" label="平齐板顶" off />
    </div>
    <div className="flex h-full flex-1 items-center bg-linear-to-b from-[#e6eaf5] to-[#d2d9ec]">
      <Grip />
      <Combo label="楼层范围" value="当前楼层" width="w-[79px]" />
      <span className="w-[2px]" />
      <Tool icon="cube" label="俯视" caret /><Tool icon="orbit" label="三维" /><Tool icon="local3d" label="局部三维" /><Sep />
      <span className="w-[2px]" /><Tool icon="full" label="全屏" /><Tool icon="zoom" label="缩放" caret /><Tool icon="pan" label="平移" caret /><Tool icon="spin" label="屏幕旋转" caret /><span className="w-[2px]" /><Sep />
      <Tool icon="display" label="构件图元显示设置" />
    </div>
  </div>
);

const TreeRow = ({ icon, label, state }) => {
  const group = state === 'open' || state === 'closed';
  return (
    <li className={`flex h-4 items-center whitespace-nowrap ${group ? 'pl-[10px]' : 'ml-[13px] border-l border-dotted border-[#777] pl-[18px]'}`}>
      {group && (
        <svg width="8" height="8" viewBox="0 0 8 8" className="mr-[5px]" aria-hidden="true">
          {state === 'open' ? <path d="M7 1v6H1z" fill="#333" /> : <path d="M1.500.5L6 4 1.500 7.500z" fill="#fff" stroke="#999" />}
        </svg>
      )}
      {!group && <span className="h-4 w-[10px] border-l border-dotted border-[#777]"><span className="block h-2 border-b border-dotted border-[#777]" /></span>}
      <span className={`flex h-4 items-center rounded-[2px] pr-1 ${group ? 'gap-[5px]' : 'gap-1'} ${state === 'active' ? 'bg-[#ededed] outline outline-[#ddd]' : ''}`}>
        <Icon name={icon} />
        <span className="leading-4"><Song>{label}</Song></span>
      </span>
    </li>
  );
};

const VThumb = ({ className }) => (
  <span className={`flex w-full items-center justify-center rounded-[2px] border border-[#999] bg-linear-to-r from-[#f3f3f3] to-[#cfcfcf] ${className}`}>
    <span className="h-2 w-[7px] border-b border-[#666] bg-[linear-gradient(#666_1px,transparent_1px)] bg-[length:100%_3px]" />
  </span>
);

const NavPanel = () => (
  <aside className="flex w-[199px] shrink-0 flex-col pt-px pb-px">
    <PanelHead title="模块导航栏" active />
    <div className="pt-px"><WideButton>工程设置</WideButton><WideButton>绘图输入</WideButton></div>
    <div className="mt-px flex min-h-0 flex-1 flex-col border border-[#8f96a3] bg-white">
      <div className="flex h-[27px] shrink-0 items-center gap-2 border-b border-[#9aa0ac] bg-linear-to-b from-[#f4f7fd] via-[#d4def4] to-[#e8eefa] pl-[6px]">
        {['+', '-'].map((s) => (
          <button type="button" key={s} aria-label={s === '+' ? '展开' : '折叠'} className="flex h-[14px] w-4 items-center justify-center border border-[#c5d4ea] bg-white">
            <svg width="10" height="10" viewBox="0 0 10 10" stroke="#3c82c4" strokeWidth="2" aria-hidden="true"><path d={s === '+' ? 'M0 5h10M5 0v10' : 'M0 5h10'} /></svg>
          </button>
        ))}
      </div>
      <div className="flex min-h-0 flex-1">
        <ul className="min-w-0 flex-1 overflow-hidden pt-px pl-[2px]">
          {tree.map(([icon, label, state]) => <TreeRow key={icon + label} icon={icon} label={label} state={state} />)}
        </ul>
        <div className="mr-[2px] flex w-[15px] flex-col items-center bg-[#f1f1f1] py-2">
          <Caret className="rotate-180" />
          <VThumb className="mt-auto mb-[6px] h-[224px]" />
          <Caret />
        </div>
      </div>
    </div>
    <div className="pt-px"><WideButton>表格输入</WideButton><WideButton>报表预览</WideButton></div>
  </aside>
);

const PartsPanel = () => (
  <section className="flex h-[324px] shrink-0 flex-col">
    <PanelHead title="构件列表" />
    <div className="flex h-7 shrink-0 items-center bg-linear-to-b from-[#f7f9fd] via-[#dfe5f4] to-[#d4dcf0]">
      <span className="w-[2px]" />
      <Tool icon="newItem" label="新建" caret /><Tool icon="remove" /><Tool icon="copyList" /><Tool icon="filter" label="过滤" caret />
    </div>
    <div className="flex h-[26px] shrink-0 items-center bg-[#f0f0f0]">
      <input aria-label="搜索构件" placeholder="搜索构件..." className="h-6 min-w-0 flex-1 border border-[#c8c8c8] bg-white px-[2px] placeholder:text-[#777]" />
      <button type="button" aria-label="搜索" className="px-[5px] text-[#5aaae0]"><Search size={14} strokeWidth={2.5} className="-scale-x-100" /></button>
    </div>
    <div className="mt-px flex-1 border-2 border-[#a3a3a3] bg-white">
      <table className="w-full border-collapse text-center">
        <thead>
          <tr className="h-5">
            <th className="w-[26px] border-r border-b border-[#c9c9c9] bg-[#f4f4f4]" aria-label="序号" />
            <th className="border-b border-[#c99a45] bg-linear-to-b from-[#f9d9a0] to-[#efbf6c] font-normal text-[#7a0a32]">构件名称</th>
          </tr>
        </thead>
        <tbody>
          <tr className="h-5">
            <td className="border-r border-b border-[#c9c9c9] bg-[#fbd9a0] leading-4 text-[#7a0a32]"><Song>1</Song></td>
            <td className="border-b border-[#c9c9c9] bg-[#deebfb] pl-5 text-left leading-4"><Song>JC-1</Song></td>
          </tr>
        </tbody>
      </table>
    </div>
  </section>
);

const PropsPanel = () => {
  const [extra, setExtra] = useState({});
  return (
    <section className="mt-[6px] flex min-h-0 flex-1 flex-col">
      <PanelHead title="属性编辑框" />
      <div className="mt-[2px] flex min-h-0 flex-1 flex-col border-2 border-[#a3a3a3] bg-white">
        <div className="flex min-h-0 flex-1 overflow-hidden">
          <div className="min-w-0 flex-1 overflow-hidden">
            <table className="w-full table-fixed border-collapse whitespace-nowrap">
              <thead>
                <tr className="h-[21px] text-left">
                  <th className="w-[84px] border-r border-b border-[#c9c9c9] bg-[#f6f6f6] pl-[2px] leading-4 font-normal">属性名称</th>
                  <th className="w-16 border-r border-b border-[#c9c9c9] bg-linear-to-b from-[#f9d9a0] to-[#efbf6c] pl-[2px] leading-4 font-normal text-[#7a0a32]">属性值</th>
                  <th className="border-b border-[#c9c9c9] bg-[#f6f6f6] pl-[2px] leading-4 font-normal">附加</th>
                </tr>
              </thead>
              <tbody>
                {props.map(([name, value, key], i) => (
                  <tr key={name} className="h-[21px]">
                    <td className={`overflow-hidden border-r border-b border-[#c9c9c9] pl-5 leading-4 ${key ? 'text-[#0000e0]' : ''}`}><Song>{name}</Song></td>
                    <td className={`border-r border-b border-[#c9c9c9] pl-[2px] leading-4 whitespace-pre ${i === 0 ? 'bg-[#deebfb]' : ''}`}><Song>{value}</Song></td>
                    <td className="border-b border-[#c9c9c9] pl-[3px]">
                      {i > 0 && (
                        <input
                          type="checkbox"
                          aria-label={`${name} 附加`}
                          checked={!!extra[name]}
                          onChange={() => setExtra({ ...extra, [name]: !extra[name] })}
                          className="block h-[13px] w-[13px] appearance-none border border-[#8a8a8a] bg-linear-to-br from-[#cfcfcf] to-white shadow-[inset_0_0_0_1px_#fff]"
                        />
                      )}
                    </td>
                  </tr>
                ))}
              </tbody>
            </table>
          </div>
          <div className="flex w-[15px] flex-col items-center bg-[#f1f1f1] py-2">
            <Caret className="rotate-180" />
            <VThumb className="mt-[6px] mb-auto h-[98px]" />
            <Caret />
          </div>
        </div>
        <div className="flex h-4 shrink-0 items-center bg-[#f1f1f1] pr-5 pl-1">
          <Caret className="rotate-90" />
          <span className="ml-2 flex h-[15px] w-11 items-center justify-center rounded-[2px] border border-[#999] bg-linear-to-b from-[#f3f3f3] to-[#cfcfcf]">
            <span className="h-[7px] w-2 border-r border-[#666] bg-[linear-gradient(90deg,#666_1px,transparent_1px)] bg-[length:3px_100%]" />
          </span>
          <Caret className="ml-auto -rotate-90" />
        </div>
      </div>
    </section>
  );
};

const SideBar = () => (
  <div className="flex w-[27px] shrink-0 flex-col items-center overflow-hidden bg-[#f0f0f0]">
    <span className="my-[2px] h-[2px] w-5 shrink-0 border-t-2 border-dotted border-[#b5b5b5]" />
    {sideTools.map((t, i) => {
      if (t === 'sep') return <span key={i} className={`h-px w-5 shrink-0 bg-[#8d8d8d] ${i > 7 ? 'my-[5px]' : 'my-[2px]'}`} />;
      const [icon, label, caret] = t;
      if (!label) return <button type="button" key={i} aria-label={icon} className="flex h-[23px] shrink-0 items-center"><Icon name={icon} /></button>;
      const spaced = sideTools[i - 1] !== 'sep';
      return (
        <button type="button" key={i} className={`flex shrink-0 flex-col items-center ${spaced ? 'mt-[7px]' : ''} ${i === 8 ? 'pt-1' : ''} ${icon === 'split' ? 'text-[#9a9a9a]' : ''}`}>
          <Icon name={icon} />
          <span className="mt-[2px] w-3 leading-[13px] break-all whitespace-normal">{label}</span>
          {caret && <span className="flex h-[6px] items-center"><Caret className="rotate-90" /></span>}
        </button>
      );
    })}
    <span className="mt-2 shrink-0 rotate-90 leading-4">»</span>
  </div>
);

const WorkArea = () => (
  <main className="flex min-w-0 flex-1 flex-col bg-[#f0f0f0]">
    <div className="flex h-[29px] shrink-0 items-center">
      <div className="flex h-full w-[493px] items-center border-b border-[#d0d0d0]">
        <Grip />
        <div className="flex gap-[5px]">
          <Combo label="楼层" value="基础层" width="w-[56px]" />
          <Combo label="类别" value="土方" width="w-[67px]" />
          <Combo label="构件类型" value="基槽土方" width="w-[67px]" />
          <Combo label="构件" value="JC-1" width="w-[67px]" />
        </div>
        <span className="w-1" /><Sep />
        <Tool icon="props" label="属性" pressed /><span className="w-px" /><Tool icon="list" label="构件列表" pressed />
        <Tool icon="dropper" label="拾取构件" />
      </div>
      <div className="flex h-full items-center border-r border-b border-[#d0d0d0]">
        <Grip />
        <Tool icon="twoPoint" label="两点" /><Tool icon="parallel" label="平行" /><Tool icon="length" label="长度标注" /><Tool icon="aligned" label="对齐标注" /><Tool icon="measure" label="测量距离" />
      </div>
    </div>
    <div className="flex h-[29px] shrink-0 items-center justify-between">
      <div className="flex h-full items-center border-r border-[#d0d0d0] pr-1">
        <Grip />
        <Tool icon="cursor" label="选择" pressed /><Caret /><Sep />
        <Tool icon="line" label="直线" /><Tool icon="addLen" label="点加长度" /><Tool icon="arc" label="三点画弧" caret />
        <span className="w-[2px]" /><Combo label="画弧方式" value="" width="w-[53px]" />
        <span className="w-[2px]" /><Tool icon="rect" label="矩形" /><span className="w-[2px]" /><Sep />
        <Tool icon="smart" label="智能布置" caret />
      </div>
      <div className="mr-5 flex h-[27px] items-center border border-[#dcdcdc]">
        <Grip /><Tool icon="extract" label="从模型提取工程量" off />
      </div>
    </div>
    <div className="flex min-h-0 flex-1">
      <SideBar />
      <div className="min-w-0 flex-1 overflow-hidden bg-black"><Scene /></div>
    </div>
    <div className="flex h-[30px] shrink-0 items-center text-[#8a8a8a]">
      <div className="flex h-full w-[478px] items-center border-r border-b border-[#d0d0d0]">
        <Grip />
        <Combo label="偏移方式" value="不偏移" width="w-[58px]" off />
        <Sep />
        <span className="pr-1 pl-[2px]">X=</span><Spin label="X" value="0" width="w-[43px]" /><span className="pl-1">mm</span>
        <span className="px-1">Y=</span><Spin label="Y" value="0" width="w-[43px]" /><span className="pl-1">mm</span>
        <Sep />
        <label className="flex items-center gap-2 pl-px text-black">
          <input type="checkbox" className="h-[13px] w-[13px] appearance-none border border-[#8a8a8a] bg-linear-to-br from-[#cfcfcf] to-white shadow-[inset_0_0_0_1px_#fff]" />
          旋转
        </label>
        <span className="w-[6px]" /><Spin label="旋转角度" value="0.000" width="w-[52px]" /><span className="pl-1">°</span>
      </div>
      <div className="flex h-full items-center border-r border-[#d0d0d0] pr-1 text-black">
        <Grip />
        <Tool icon="ortho" label="正交" /><Tool icon="cross" label="交点" /><Tool icon="perp" label="垂点" pressed /><Tool icon="mid" label="中点" pressed /><Tool icon="vertex" label="顶点" /><Tool icon="coord" label="坐标" />
      </div>
    </div>
  </main>
);

const StatusBar = () => (
  <footer className="relative flex h-[23px] shrink-0 items-center border-t border-[#9a9a9a] bg-[#f0edec] leading-4 whitespace-nowrap">
    <span className="w-[149px] border-r border-[#c9c6c4] pl-px"><Song>X=872 Y=22954</Song></span>
    <span className="w-[78px] border-r border-[#c9c6c4] pl-[2px]"><Song>层高:1.8m</Song></span>
    <span className="w-[132px] border-r border-[#c9c6c4] pl-1"><Song>建筑底标高:-1.8m</Song></span>
    <span className="w-[50px] border-r border-[#c9c6c4] pl-[2px]"><Song>0</Song></span>
    <span className="h-4 w-[251px] border-r border-[#c9c6c4]" />
    <span className="h-4 flex-1" />
    <span className="w-[221px] border-l border-[#c9c6c4] pl-px"><Song>399</Song></span>
    <div className="absolute inset-y-0 right-0 flex w-[202px] items-center justify-between rounded-l bg-white pr-1 pl-[30px] text-[#1a6fc4]">
      <svg width="30" height="28" viewBox="0 0 30 28" className="absolute -top-[3px] -left-[5px]" aria-hidden="true"><path d="M2 5L25 1l3 22-22 4z" fill="#ee4d24" stroke="#c93b17" /><path d="M22 7c-7-2-14 0-13 4 1 3 12 2 12 6 0 3-7 4-13 3" stroke="#fff" strokeWidth="3.500" fill="none" strokeLinecap="round" /></svg>
      <b className="text-[14px]">英</b>
      <svg width="12" height="12" viewBox="0 0 12 12" aria-hidden="true"><circle cx="3" cy="4" r="2" fill="#1a6fc4" /><path d="M9 7c2 0 2 3 0 4" stroke="#1a6fc4" strokeWidth="1.500" fill="none" /></svg>
      <Smile size={17} />
      <Mic size={16} fill="#1a6fc4" />
      <Keyboard size={17} />
      <UserRound size={15} fill="#b5bfcc" color="#b5bfcc" />
      <Shirt size={15} fill="#1a6fc4" />
      <svg width="14" height="14" viewBox="0 0 14 14" fill="#1a6fc4" aria-hidden="true"><path d="M0 0h6v6H0zM0 8h6v6H0zM8 8h6v6H8z" /><path d="M8.500.5h5v5h-5z" fill="none" stroke="#1a6fc4" /></svg>
    </div>
  </footer>
);

const TaskBar = () => (
  <div className="flex h-[7px] shrink-0 overflow-hidden border-t border-[#7d93b5] bg-linear-to-r from-[#14305c] via-[#17386b] to-[#0e2a54]">
    <span className="ml-[14px] h-6 w-7 rounded-full bg-[#8fb3d4]" />
    <span className="ml-[34px] flex w-14 justify-center rounded-t bg-[#7fa0c4]"><i className="mt-[2px] h-5 w-5 rounded-full bg-[#48b04a]" /></span>
    <span className="ml-1 flex w-14 justify-center rounded-t bg-[#8fb0d0]"><i className="mt-[1px] h-5 w-8 bg-[#2f87e0]" /></span>
    <span className="ml-[26px] mt-[3px] h-5 w-3 rounded-full bg-[#222]" />
    <span className="ml-[32px] flex w-14 justify-center rounded-t bg-[#8ea6b8]"><i className="mt-[1px] h-5 w-7 rounded-full bg-[#d8cf9a]" /></span>
    <span className="ml-1 flex w-14 justify-center rounded-t bg-[#9fc2c4]"><i className="h-5 w-8 rounded-lg bg-[#27c05a]" /></span>
    <span className="ml-auto h-full w-3 border-l border-[#8ea6c8] bg-[#4a678f]" />
  </div>
);

const App = () => (
  <div className="flex h-screen flex-col overflow-hidden bg-[#f0f0f0] font-['Noto_Sans','Noto_Sans_CJK_SC',sans-serif] text-[12px] text-black">
    <TitleBar />
    <MenuBar />
    <MainToolbar />
    <div className="flex min-h-0 flex-1">
      <NavPanel />
      <div className="mx-1 flex w-[199px] shrink-0 flex-col pt-px pb-px">
        <PartsPanel />
        <PropsPanel />
      </div>
      <WorkArea />
    </div>
    <StatusBar />
    <TaskBar />
  </div>
);

export default App;
